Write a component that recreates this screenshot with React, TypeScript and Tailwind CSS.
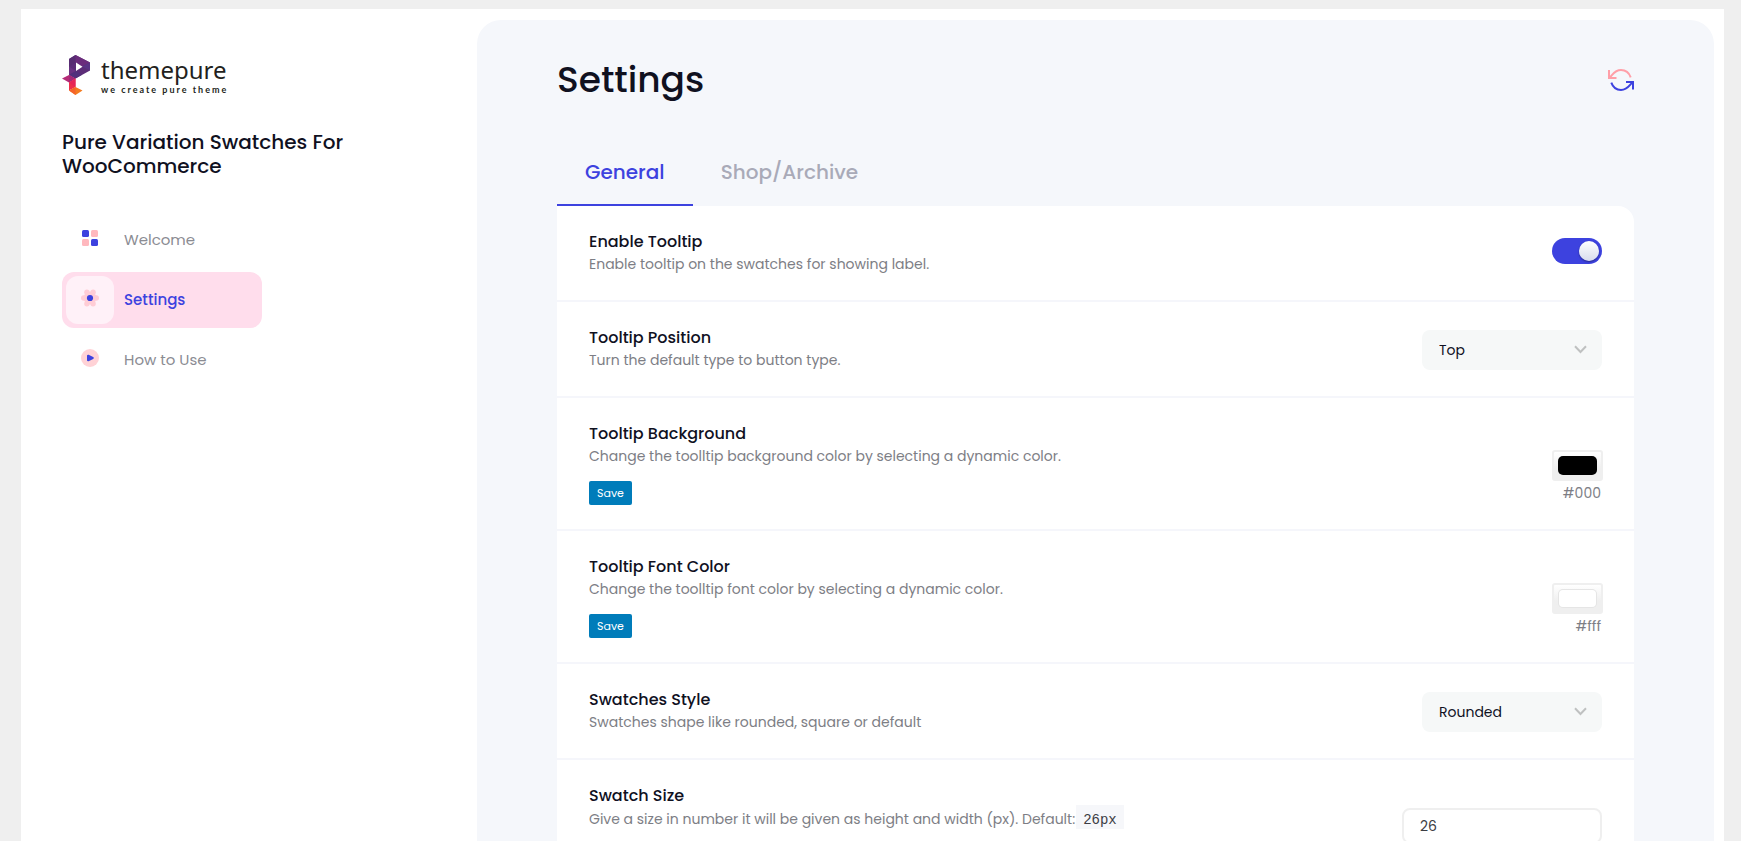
import { useState, type ReactNode } from "react";

function Logo() {
  return (
    <a href="#home" className="flex items-start gap-[11px]">
      <svg width="28" height="40" viewBox="0 0 28 40" aria-hidden="true">
        <path d="M13.5 0 7 4v16l6.500 3.500L28 15.500v-8z" fill="#5c2d78" />
        <path d="M13.500 0 7 4v7.500L14 7.500z" fill="#572c72" />
        <path d="M13.500 0v8l6.500 3.500L28 7.500z" fill="#6b2c7c" />
        <path d="M7 11.500v8.500L14 16z" fill="#6a3282" />
        <path d="M20 11.500 28 7.500v8z" fill="#5a3384" />
        <path d="M14 16 7 20l6.500 3.500L20 19.800z" fill="#52307c" />
        <path d="M14 7.500V16l6.500-4.200z" fill="#fff" />
        <path d="M0 23.500 7 20l6.500 3.500L7 27.500z" fill="#b52b78" />
        <path d="M7 20v7.500l6.500-4z" fill="#a42a78" />
        <path d="M7 27.500l6.500-4V32L7 35.500z" fill="#ee2f4a" />
        <path d="M7 27.500 13.500 32v-8.500z" fill="#e62658" />
        <path d="M7 35.500 13.500 32l7 3.500-7 4.500z" fill="#f47b20" />
        <path d="M7 35.500 13.500 32v8z" fill="#f5632a" />
      </svg>
      <span className="flex flex-col font-['Noto_Sans',sans-serif] text-[#231f20]">
        <span className="text-[24px] leading-[29px]">themepure</span>
        <span className="font-['Lato',sans-serif] text-[9px] font-bold leading-[11px] tracking-[2px]">
          we create pure theme
        </span>
      </span>
    </a>
  );
}

function GridIcon() {
  return (
    <svg width="16" height="16" viewBox="0 0 16 16" aria-hidden="true">
      <rect width="7" height="7" rx="1.500" fill="#3d42df" />
      <rect x="9" width="7" height="7" rx="1.500" fill="#ffb8be" />
      <rect y="9" width="7" height="7" rx="1.500" fill="#ffb8be" />
      <rect x="9" y="9" width="7" height="7" rx="1.500" fill="#3d42df" />
    </svg>
  );
}

function GearIcon() {
  return (
    <svg width="18" height="18" viewBox="0 0 18 18" aria-hidden="true">
      <g fill="#ffcdd6">
        <circle cx="9" cy="9" r="6.500" />
        <circle cx="2.700" cy="9" r="2.700" />
        <circle cx="15.300" cy="9" r="2.700" />
        <circle cx="5.900" cy="3.300" r="2.700" />
        <circle cx="12.100" cy="3.300" r="2.700" />
        <circle cx="5.900" cy="14.700" r="2.700" />
        <circle cx="12.100" cy="14.700" r="2.700" />
      </g>
      <circle cx="9" cy="9" r="3.100" fill="#3d42df" />
    </svg>
  );
}

function PlayIcon() {
  return (
    <svg width="18" height="18" viewBox="0 0 18 18" aria-hidden="true">
      <circle cx="9" cy="9" r="9" fill="#ffd2d6" />
      <path d="M7.100 6.800v4.400L11.700 9z" fill="#3d42df" stroke="#3d42df" strokeWidth="2.200" strokeLinejoin="round" />
    </svg>
  );
}

function RefreshIcon() {
  return (
    <svg width="26" height="22" viewBox="0 0 26 22" fill="none" strokeWidth="2" aria-hidden="true">
      <path d="M1 1v8h7.500M1 9C4.500 6.500 6 1 13 1c4.500 0 8 2.500 9.700 7.300" stroke="#ff9fa8" />
      <path d="M18 13h7v7.500M25 13c-3.500 2.500-5 8-12 8-4.500 0-8-2.500-9.700-7.300" stroke="#3d42df" />
    </svg>
  );
}

const nav = [
  { label: "Welcome", icon: <GridIcon />, active: false },
  { label: "Settings", icon: <GearIcon />, active: true },
  { label: "How to Use", icon: <PlayIcon />, active: false },
];

type RowProps = {
  id: string;
  title: string;
  text: ReactNode;
  control: ReactNode;
  align?: string;
  save?: boolean;
};

function Row({ id, title, text, control, align = "items-end", save = false }: RowProps) {
  return (
    <div
      className={`flex justify-between gap-8 border-b-2 border-[#f5f6fb] px-8 pt-6 ${
        save ? "pb-6" : "pb-[26px]"
      } ${align}`}
    >
      <div>
        <label htmlFor={id} className="block text-[16px] font-medium leading-6 text-[#10111f]">
          {title}
        </label>
        <p className="text-[14px] leading-5 text-[#7d7e85]">{text}</p>
        {save && (
          <button type="button" className="mt-[15px] block h-6 rounded-[2px] bg-[#007cba] px-2 text-[11px] text-white">
            Save
          </button>
        )}
      </div>
      {control}
    </div>
  );
}

function Select({ id, options }: { id: string; options: string[] }) {
  return (
    <div className="relative w-[180px] shrink-0">
      <select id={id} className="h-10 w-full appearance-none rounded-lg bg-[#f6f8f8] px-[17px] text-[14px] text-[#10111f]">
        {options.map((option) => (
          <option key={option}>{option}</option>
        ))}
      </select>
      <svg
        className="pointer-events-none absolute right-[15px] top-[15px]"
        width="13"
        height="9"
        viewBox="0 0 13 9"
        fill="none"
        stroke="#bfc1c1"
        strokeWidth="2"
        aria-hidden="true"
      >
        <path d="M1 1.200 6.500 7 12 1.200" />
      </svg>
    </div>
  );
}

function ColorField({ id, initial, short }: { id: string; initial: string; short: string }) {
  const [color, setColor] = useState(initial);
  return (
    <div className="-mr-px flex shrink-0 flex-col items-end">
      <input
        id={id}
        type="color"
        value={color}
        onChange={(e) => setColor(e.target.value)}
        className="h-[31px] w-[51px] appearance-none rounded-[3px] border-2 border-[#efefef] bg-linear-to-b from-white to-[#efefef] to-60% p-1 [&::-webkit-color-swatch-wrapper]:p-0 [&::-webkit-color-swatch]:rounded-[5px] [&::-webkit-color-swatch]:border [&::-webkit-color-swatch]:border-black/10"
      />
      <span className="pr-[2px] text-[14px] leading-6 text-[#7d7e85]">{color === initial ? short : color}</span>
    </div>
  );
}

export default function App() {
  const [tooltip, setTooltip] = useState(true);
  return (
    <div className="min-h-screen bg-[#efefef] pl-[21px] pr-[17px] pt-[9px] font-['Poppins','Inter',sans-serif] text-[#10111f]">
      <div className="flex min-h-screen bg-white pr-[10px] pt-[11px]">
        <aside className="w-[456px] shrink-0 px-[41px] pt-[35px]">
          <Logo />
          <h2 className="mt-[35px] max-w-[300px] text-[20px] font-medium leading-6">
            Pure Variation Swatches For WooCommerce
          </h2>
          <nav className="mt-[34px] flex w-[200px] flex-col gap-1">
            {nav.map((item) => (
              <a
                key={item.label}
                href={`#${item.label.toLowerCase().replaceAll(" ", "-")}`}
                className={`flex items-center gap-[10px] rounded-xl p-1 text-[15px] ${
                  item.active ? "bg-[#ffddec] font-medium text-[#3d42df]" : "text-[#8b8c93]"
                }`}
              >
                <span
                  className={`flex size-12 items-center justify-center rounded-xl pb-1 ${
                    item.active ? "bg-[#fff1f8]" : ""
                  }`}
                >
                  {item.icon}
                </span>
                {item.label}
              </a>
            ))}
          </nav>
        </aside>

        <main className="min-w-0 grow rounded-t-3xl bg-[#f5f7fb] px-20 pt-10">
          <header className="mb-15 flex items-center justify-between">
            <h1 className="text-[36px] font-medium leading-10">Settings</h1>
            <button type="button" aria-label="Reset settings">
              <RefreshIcon />
            </button>
          </header>

          <div role="tablist" className="flex text-[20px] font-medium leading-6">
            <button
              type="button"
              role="tab"
              aria-selected="true"
              className="border-b-2 border-[#3d42df] px-7 pb-5 text-[#3d42df]"
            >
              General
            </button>
            <button
              type="button"
              role="tab"
              aria-selected="false"
              className="border-b-2 border-transparent px-7 pb-5 text-[#a9aab8]"
            >
              Shop/Archive
            </button>
          </div>

          <section className="rounded-tr-2xl bg-white">
            <Row
              id="enable-tooltip"
              title="Enable Tooltip"
              text="Enable tooltip on the swatches for showing label."
              align="items-start"
              control={
                <input
                  id="enable-tooltip"
                  type="checkbox"
                  role="switch"
                  checked={tooltip}
                  onChange={(e) => setTooltip(e.target.checked)}
                  className="mt-2 flex h-[26px] w-[50px] shrink-0 appearance-none items-center rounded-full bg-[#c9cad6] px-[3px] before:size-5 before:rounded-full before:bg-linear-to-b before:from-white before:to-[#d8dcec] before:shadow-[0_1px_2px_rgba(0,0,0,0.4)] checked:justify-end checked:bg-[#3d42df]"
                />
              }
            />
            <Row
              id="tooltip-position"
              title="Tooltip Position"
              text="Turn the default type to button type."
              control={<Select id="tooltip-position" options={["Top", "Bottom"]} />}
            />
            <Row
              id="tooltip-background"
              title="Tooltip Background"
              text="Change the toolltip background color by selecting a dynamic color."
              save
              control={<ColorField id="tooltip-background" initial="#000000" short="#000" />}
            />
            <Row
              id="tooltip-font-color"
              title="Tooltip Font Color"
              text="Change the toolltip font color by selecting a dynamic color."
              save
              control={<ColorField id="tooltip-font-color" initial="#ffffff" short="#fff" />}
            />
            <Row
              id="swatches-style"
              title="Swatches Style"
              text="Swatches shape like rounded, square or default"
              control={<Select id="swatches-style" options={["Rounded", "Square", "Default"]} />}
            />
            <Row
              id="swatch-size"
              title="Swatch Size"
              align="items-start"
              text={
                <>
                  Give a size in number it will be given as height and width (px). Default:
                  <code className="ml-px bg-[#f6f7fa] px-[7px] pb-px pt-[7px] font-['Liberation_Mono',monospace] text-[14px] leading-[25px] text-[#3c3d44]">
                    26px
                  </code>
                </>
              }
              control={
                <input
                  id="swatch-size"
                  type="text"
                  defaultValue="26"
                  className="mt-6 h-9 w-[200px] shrink-0 rounded-lg border-2 border-[#efefef] bg-white px-4 text-[14px] text-[#3c3d44]"
                />
              }
            />
          </section>
        </main>
      </div>
    </div>
  );
}
